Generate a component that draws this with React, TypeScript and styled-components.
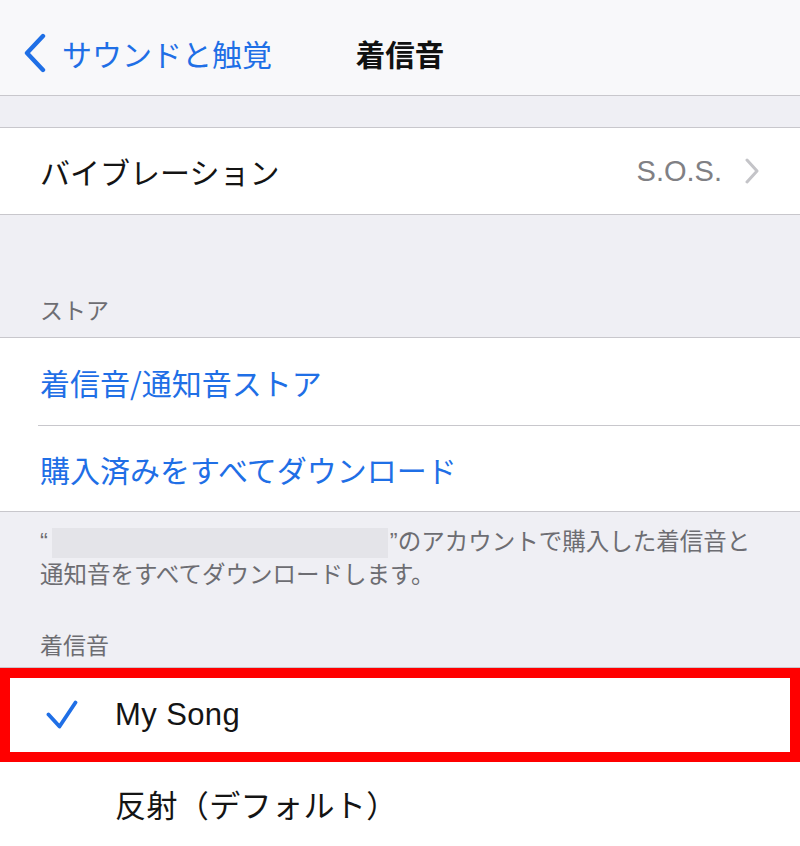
import React from "react";
import styled, { createGlobalStyle } from "styled-components";

const BLUE = "#1f6fe6";
const SEP = "#c8c7cc";

const GlobalStyle = createGlobalStyle`
  html, body { margin: 0; padding: 0; }
  body {
    background: #efeff4;
    font-family: "Liberation Sans", "Noto Sans CJK JP", sans-serif;
    -webkit-font-smoothing: antialiased;
  }
`;

const Screen = styled.div`
  width: 800px;
  height: 846px;
  overflow: hidden;
  background: #efeff4;
`;

const NavBar = styled.header`
  height: 96px;
  box-sizing: border-box;
  padding-top: 10px;
  background: #f8f8fa;
  border-bottom: 1px solid ${SEP};
  display: grid;
  grid-template-columns: 1fr auto 1fr;
  align-items: center;
`;

const BackButton = styled.div`
  display: flex;
  align-items: center;
  gap: 15px;
  padding-left: 23px;
  color: ${BLUE};
  font-size: 30px;
  line-height: 40px;
  font-family: "Noto Sans CJK JP", sans-serif;
`;

const NavTitle = styled.div`
  font-family: "Noto Sans CJK JP", sans-serif;
  font-weight: 700;
  font-size: 29.5px;
  line-height: 40px;
  color: #111;
`;

const Spacer = styled.div<{ $h: number }>`
  height: ${(p) => p.$h}px;
`;

const Group = styled.section`
  background: #fff;
  border-top: 1px solid ${SEP};
  border-bottom: 1px solid ${SEP};
`;

const Row = styled.div`
  display: flex;
  padding-left: 38px;
`;

const RowContent = styled.div<{ $h: number; $divided?: boolean }>`
  flex: 1;
  height: ${(p) => p.$h}px;
  box-sizing: border-box;
  display: flex;
  align-items: center;
  justify-content: space-between;
  padding: 0 40px 0 2px;
  border-top: ${(p) => (p.$divided ? `1px solid ${SEP}` : "none")};
`;

const Label = styled.span<{ $link?: boolean }>`
  font-family: "Noto Sans CJK JP", sans-serif;
  font-size: 30px;
  line-height: 40px;
  color: ${(p) => (p.$link ? BLUE : "#141414")};
`;

const Detail = styled.span`
  display: flex;
  align-items: center;
  gap: 22px;
  font-size: 29px;
  color: #808084;
  font-family: "Liberation Sans", sans-serif;
`;

const SectionHeader = styled.div<{ $top: number; $bottom: number }>`
  padding: ${(p) => p.$top}px 40px ${(p) => p.$bottom}px;
  font-family: "Noto Sans CJK JP", sans-serif;
  font-size: 23px;
  line-height: 28px;
  color: #6d6d72;
`;

const Footer = styled.p`
  margin: 0;
  padding: 14px 40px 0;
  font-family: "Liberation Sans", "Noto Sans CJK JP", sans-serif;
  font-size: 23.5px;
  line-height: 33px;
  color: #6d6d72;
`;

const Redacted = styled.span`
  display: inline-block;
  width: 336px;
  height: 30px;
  margin: 0 2px 0 4px;
  vertical-align: -8px;
  background: #e4e4e9;
`;

const ToneRow = styled.div<{ $h: number }>`
  position: relative;
  height: ${(p) => p.$h}px;
  display: flex;
  align-items: center;
  padding-left: 46px;
  background: #fff;
`;

const CheckSlot = styled.span`
  width: 69px;
  display: flex;
  align-items: center;
`;

const ToneName = styled.span`
  font-family: "Liberation Sans", "Noto Sans CJK JP", sans-serif;
  font-size: 31px;
  line-height: 40px;
  letter-spacing: 0.4px;
  color: #141414;
`;

const Highlight = styled.div`
  position: absolute;
  inset: 0;
  border: 10px solid #ff0000;
  pointer-events: none;
`;

const ToneGroup = styled.section`
  background: #fff;
  border-top: 1px solid ${SEP};
`;

const BackChevron = () => (
  <svg width="24" height="40" viewBox="0 0 24 40">
    <path d="M20 3 L4 20 L20 37" fill="none" stroke={BLUE} strokeWidth="4.4" strokeLinecap="round" strokeLinejoin="round" />
  </svg>
);

const Disclosure = () => (
  <svg width="16" height="26" viewBox="0 0 16 26">
    <path d="M3 2 L13 13 L3 24" fill="none" stroke="#c4c4c8" strokeWidth="3" strokeLinecap="round" strokeLinejoin="round" />
  </svg>
);

const Check = () => (
  <svg width="32" height="30" viewBox="0 0 32 30">
    <path d="M2.5 14.5 L13.5 26.5 L29.5 2.5" fill="none" stroke={BLUE} strokeWidth="3.8" strokeLinecap="round" strokeLinejoin="round" />
  </svg>
);

export default function App() {
  return (
    <>
      <GlobalStyle />
      <Screen>
        <NavBar>
          <BackButton>
            <BackChevron />
            サウンドと触覚
          </BackButton>
          <NavTitle>着信音</NavTitle>
          <span />
        </NavBar>
        <Spacer $h={31} />
        <Group>
          <Row>
            <RowContent $h={86}>
              <Label>バイブレーション</Label>
              <Detail>
                S.O.S.
                <Disclosure />
              </Detail>
            </RowContent>
          </Row>
        </Group>
        <SectionHeader $top={80} $bottom={14}>ストア</SectionHeader>
        <Group>
          <Row>
            <RowContent $h={87}>
              <Label $link>着信音/通知音ストア</Label>
            </RowContent>
          </Row>
          <Row>
            <RowContent $h={86} $divided>
              <Label $link>購入済みをすべてダウンロード</Label>
            </RowContent>
          </Row>
        </Group>
        <Footer>
          “<Redacted />”のアカウントで購入した着信音と
          <br />
          通知音をすべてダウンロードします。
        </Footer>
        <SectionHeader $top={38} $bottom={9}>着信音</SectionHeader>
        <ToneGroup>
          <ToneRow $h={94}>
            <CheckSlot>
              <Check />
            </CheckSlot>
            <ToneName>My Song</ToneName>
            <Highlight />
          </ToneRow>
          <ToneRow $h={90}>
            <CheckSlot />
            <ToneName>反射（デフォルト）</ToneName>
          </ToneRow>
        </ToneGroup>
      </Screen>
    </>
  );
}
